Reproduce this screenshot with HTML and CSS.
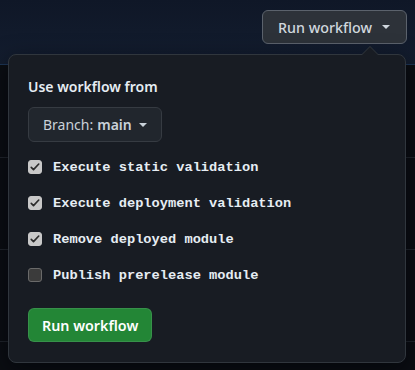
FILE: index.html
```html
<!DOCTYPE html>
<html lang="en">
<head>
    <meta charset="UTF-8">
    <meta name="viewport" content="width=device-width, initial-scale=1.0">
    <title>Run workflow</title>
    <link rel="stylesheet" href="styles.css">
</head>
<body>

<header class="topbar">
    <button class="btn-outline">Run workflow <span class="caret"></span></button>
</header>

<div class="rows">
    <div class="row"></div>
    <div class="row"></div>
    <div class="row"></div>
</div>

<div class="popover">
    <p class="popover-title">Use workflow from</p>
    <button class="btn-branch">Branch: <strong>main</strong> <span class="caret"></span></button>

    <ul class="inputs">
        <li>
            <span class="check checked">
                <svg viewBox="0 0 16 16" width="12" height="12"><path d="M3 8.5l3 3 7-7.5" fill="none" stroke="#2b2b2b" stroke-width="2.2" stroke-linecap="round" stroke-linejoin="round"/></svg>
            </span>
            <label>Execute static validation</label>
        </li>
        <li>
            <span class="check checked">
                <svg viewBox="0 0 16 16" width="12" height="12"><path d="M3 8.5l3 3 7-7.5" fill="none" stroke="#2b2b2b" stroke-width="2.2" stroke-linecap="round" stroke-linejoin="round"/></svg>
            </span>
            <label>Execute deployment validation</label>
        </li>
        <li>
            <span class="check checked">
                <svg viewBox="0 0 16 16" width="12" height="12"><path d="M3 8.5l3 3 7-7.5" fill="none" stroke="#2b2b2b" stroke-width="2.2" stroke-linecap="round" stroke-linejoin="round"/></svg>
            </span>
            <label>Remove deployed module</label>
        </li>
        <li>
            <span class="check"></span>
            <label>Publish prerelease module</label>
        </li>
    </ul>

    <button class="btn-primary">Run workflow</button>
</div>

</body>
</html>
```

FILE: styles.css
```css
body {
    font-family: 'Noto Sans', 'Liberation Sans', sans-serif;
    font-size: 14px;
    background-color: #0b0e13;
    color: #e6edf3;
    margin: 0;
    padding: 0;
    height: 370px;
    overflow: hidden;
}
.topbar {
    height: 65px;
    box-sizing: border-box;
    background: linear-gradient(180deg, #0f1727 0%, #131d2f 100%);
    border-bottom: 1px solid #1d3656;
    display: flex;
    justify-content: flex-end;
    align-items: flex-start;
    padding: 10px 8px 0 0;
}
button {
    font-family: inherit;
    font-size: 14px;
    cursor: pointer;
    border-radius: 6px;
    display: flex;
    align-items: center;
}
.btn-outline {
    height: 34px;
    width: 145px;
    padding: 0 15px;
    background-color: #2d3239;
    border: 1px solid #5b626c;
    color: #d0d7de;
    font-weight: 500;
    font-size: 14.3px;
}
.caret {
    display: inline-block;
    width: 0;
    height: 0;
    border-left: 4px solid transparent;
    border-right: 4px solid transparent;
    border-top: 4px solid currentColor;
    margin-left: 10px;
}
.rows {
    padding-top: 92px;
}
.row {
    height: 92px;
    border-top: 1px solid #21262d;
    box-sizing: border-box;
}
.row:last-child {
    height: 28px;
}
.popover {
    position: absolute;
    left: 8px;
    top: 54px;
    width: 398px;
    height: 309px;
    box-sizing: border-box;
    background-color: #181c23;
    border: 1px solid #30363d;
    border-radius: 8px;
    padding: 22px 19px 20px;
    box-shadow: 0 8px 24px rgba(1, 4, 9, 0.6);
}
.popover::before {
    content: "";
    position: absolute;
    top: -9px;
    right: 26px;
    border-left: 9px solid transparent;
    border-right: 9px solid transparent;
    border-bottom: 9px solid #30363d;
}
.popover::after {
    content: "";
    position: absolute;
    top: -8px;
    right: 27px;
    border-left: 8px solid transparent;
    border-right: 8px solid transparent;
    border-bottom: 8px solid #181c23;
}
.popover-title {
    margin: 0;
    font-weight: 600;
    line-height: 20px;
}
.btn-branch {
    margin-top: 10px;
    height: 35px;
    padding: 0 14px;
    background-color: #21262d;
    border: 1px solid #363b42;
    color: #c9d1d9;
}
.btn-branch strong {
    margin-left: 4px;
    font-weight: 600;
}
.btn-branch .caret {
    margin-left: 7px;
}
.inputs {
    list-style: none;
    margin: 7px 0 15px;
    padding: 0;
}
.inputs li {
    height: 36px;
    display: flex;
    align-items: center;
}
.check {
    width: 14px;
    height: 14px;
    box-sizing: border-box;
    border-radius: 3px;
    background-color: #3b3b3b;
    border: 1px solid #6a6a6a;
    display: flex;
    align-items: center;
    justify-content: center;
    margin-right: 11px;
}
.check.checked {
    background-color: #c8c8c8;
    border-color: #c8c8c8;
}
.inputs label {
    font-family: 'Liberation Mono', 'DejaVu Sans Mono', monospace;
    font-weight: bold;
    font-size: 13.7px;
    color: #e6edf3;
}
.btn-primary {
    height: 34px;
    padding: 0 13px;
    background-color: #238636;
    border: 1px solid rgba(240, 246, 252, 0.1);
    color: #ffffff;
    font-weight: 600;
    font-size: 14.3px;
}
```
